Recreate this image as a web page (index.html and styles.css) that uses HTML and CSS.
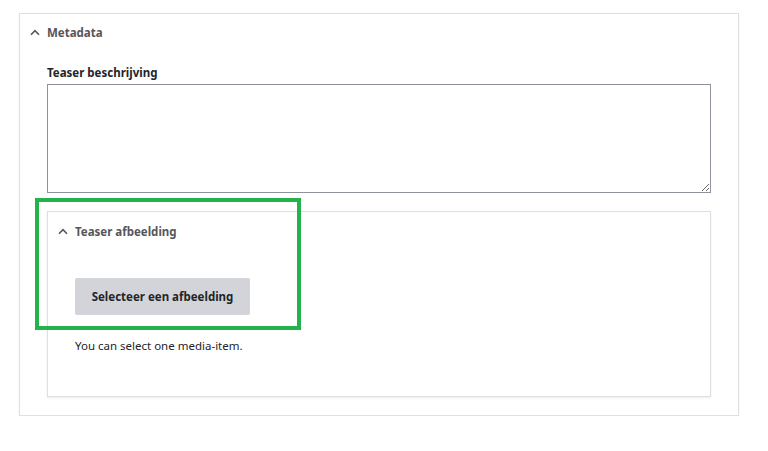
FILE: index.html
```html
<!DOCTYPE html>
<html lang="nl">
<head>
<meta charset="utf-8">
<title>Metadata</title>
<link rel="stylesheet" href="styles.css">
</head>
<body>
<section class="panel">
  <div class="panel-head">
    <svg class="chev" width="10" height="7" viewBox="0 0 10 7"><path d="M1 5.8 L5 1.6 L9 5.8" fill="none" stroke="#55565b" stroke-width="1.6"/></svg>
    <span>Metadata</span>
  </div>
  <label class="field-label" for="teaser">Teaser beschrijving</label>
  <textarea id="teaser" class="area"></textarea>
  <div class="sub-wrap">
    <section class="subpanel">
      <div class="sub-head">
        <svg class="chev" width="10" height="7" viewBox="0 0 10 7"><path d="M1 5.8 L5 1.6 L9 5.8" fill="none" stroke="#55565b" stroke-width="1.6"/></svg>
        <span>Teaser afbeelding</span>
      </div>
      <div class="sub-body">
        <button class="btn" type="button">Selecteer een afbeelding</button>
        <p class="help">You can select one media-item.</p>
      </div>
    </section>
    <div class="highlight"></div>
  </div>
</section>
</body>
</html>
```

FILE: styles.css
```css
html, body {
  margin: 0;
  padding: 0;
  background: #ffffff;
}
body {
  font-family: "Noto Sans", "Open Sans", "Liberation Sans", sans-serif;
  font-size: 11.5px;
  color: #232429;
  padding: 13px 29px 0 19px;
}
.panel {
  border: 1px solid #dedfe4;
  box-shadow: 0 1px 2px rgba(0,0,0,0.06);
  padding: 0 27px 18px 27px;
  width: 664px;
}
.panel-head {
  height: 36px;
  display: flex;
  align-items: center;
  gap: 7px;
  margin-left: -17px;
  font-weight: 700;
  color: #55565b;
}
.chev {
  display: block;
}
.field-label {
  display: block;
  margin-top: 15px;
  font-weight: 700;
  line-height: 16px;
  color: #232429;
}
.area {
  display: block;
  box-sizing: border-box;
  width: 664px;
  height: 109px;
  margin: 3px 0 0 0;
  border: 1px solid #8e929c;
  border-radius: 0;
  resize: both;
  font-family: inherit;
}
.sub-wrap {
  position: relative;
  margin-top: 18px;
}
.subpanel {
  border: 1px solid #dedfe4;
  box-shadow: 0 1px 2px rgba(0,0,0,0.08);
  width: 662px;
}
.sub-head {
  height: 38px;
  display: flex;
  align-items: center;
  gap: 7px;
  padding-left: 10px;
  font-weight: 700;
  color: #55565b;
}
.sub-body {
  padding: 28px 27px 42px 27px;
}
.btn {
  display: block;
  width: 175px;
  height: 37px;
  border: 0;
  border-radius: 2px;
  background: #d3d4d9;
  font-family: inherit;
  font-size: 11.5px;
  font-weight: 700;
  color: #232429;
  padding: 0;
}
.help {
  margin: 23px 0 0 0;
  line-height: 16px;
  color: #232429;
}
.highlight {
  position: absolute;
  left: -12px;
  top: -13px;
  width: 258px;
  height: 124px;
  border: 4px solid #23b24b;
  pointer-events: none;
}
```
